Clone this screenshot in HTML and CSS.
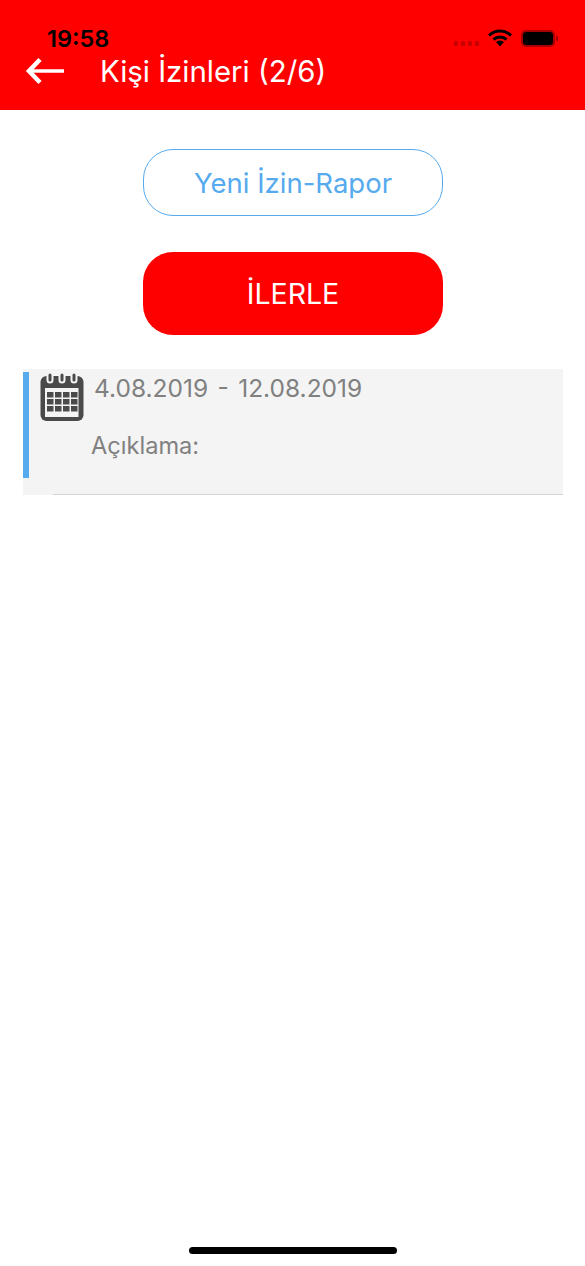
FILE: index.html
```html
<!DOCTYPE html>
<html lang="tr">
<head>
    <meta charset="UTF-8">
    <meta name="viewport" content="width=device-width, initial-scale=1.0">
    <title>Kişi İzinleri</title>
    <link rel="stylesheet" href="styles.css">
</head>
<body>
    <header class="topbar">
        <div class="status-bar">
            <span class="status-time">19:58</span>
            <div class="status-icons">
                <div class="signal">
                    <span></span><span></span><span></span><span></span>
                </div>
                <svg class="wifi" width="24" height="18" viewBox="0 0 24 18">
                    <path d="M1 6.500 A16 16 0 0 1 23 6.500" fill="none" stroke="#000" stroke-width="3"/>
                    <path d="M5.500 10.500 A10 10 0 0 1 18.500 10.500" fill="none" stroke="#000" stroke-width="3"/>
                    <path d="M8 13 A6 6 0 0 1 16 13 L12 17.500 Z" fill="#000"/>
                </svg>
                <div class="battery">
                    <div class="battery-fill"></div>
                </div>
                <div class="battery-cap"></div>
            </div>
        </div>
        <div class="nav-row">
            <svg class="back-arrow" width="40" height="28" viewBox="0 0 40 28">
                <path d="M39 14 H5" fill="none" stroke="#fff" stroke-width="3.500"/>
                <path d="M15 2.500 L4 14 L15 25.500" fill="none" stroke="#fff" stroke-width="4.500"/>
            </svg>
            <h1 class="nav-title">Kişi İzinleri (2/6)</h1>
        </div>
    </header>

    <main class="content">
        <a class="btn btn-outline">Yeni İzin-Rapor</a>
        <a class="btn btn-red">İLERLE</a>

        <div class="leave-row">
            <div class="leave-bar"></div>
            <div class="leave-body">
                <div class="leave-head">
                    <svg class="calendar" width="44" height="50" viewBox="0 0 44 50">
                        <rect x="0.500" y="4" width="43" height="45" rx="6" fill="#4a4a4a"/>
                        <rect x="5" y="16" width="33.500" height="29" fill="#f4f4f4"/>
                        <path d="M10 8 V3.500 M22 8 V3.500 M34 8 V3.500" stroke="#f4f4f4" stroke-width="7" stroke-linecap="round"/>
                        <path d="M10 8 V3 M22 8 V3 M34 8 V3" stroke="#4a4a4a" stroke-width="3" stroke-linecap="round"/>
                        <g fill="#4a4a4a">
                            <rect x="7" y="20" width="6.500" height="5.500"/><rect x="15" y="20" width="6.500" height="5.500"/><rect x="23" y="20" width="6.500" height="5.500"/><rect x="31" y="20" width="6.500" height="5.500"/>
                            <rect x="7" y="27" width="6.500" height="5.500"/><rect x="15" y="27" width="6.500" height="5.500"/><rect x="23" y="27" width="6.500" height="5.500"/><rect x="31" y="27" width="6.500" height="5.500"/>
                            <rect x="7" y="34" width="6.500" height="5.500"/><rect x="15" y="34" width="6.500" height="5.500"/><rect x="23" y="34" width="6.500" height="5.500"/><rect x="31" y="34" width="6.500" height="5.500"/>
                        </g>
                    </svg>
                    <span class="leave-dates">4.08.2019 - 12.08.2019</span>
                </div>
                <div class="leave-note">Açıklama:</div>
            </div>
        </div>
    </main>

    <div class="home-indicator"></div>
</body>
</html>
```

FILE: styles.css
```css
body {
    font-family: Inter, "Noto Sans", "Liberation Sans", sans-serif;
    margin: 0;
    padding: 0;
    background-color: #fff;
    height: 1266px;
    position: relative;
    overflow: hidden;
}

.topbar {
    background-color: #ff0000;
    height: 110px;
    box-sizing: border-box;
    padding-top: 24px;
}
.status-bar {
    display: flex;
    justify-content: space-between;
    align-items: center;
    height: 28px;
    padding: 0 27px 0 47px;
}
.status-time {
    color: #000;
    font-size: 23.500px;
    font-weight: 600;
}
.status-icons {
    display: flex;
    align-items: center;
}
.signal {
    display: flex;
    gap: 3px;
    margin-right: 9px;
    margin-top: 10px;
}
.signal span {
    width: 4px;
    height: 5px;
    border-radius: 1px;
    background-color: #c80000;
}
.wifi {
    margin-right: 9px;
}
.battery {
    width: 34px;
    height: 17px;
    box-sizing: border-box;
    border: 2px solid #a80000;
    border-radius: 5px;
    padding: 0;
}
.battery-fill {
    height: 100%;
    background-color: #000;
    border-radius: 3px;
}
.battery-cap {
    width: 2px;
    height: 5px;
    margin-left: 1px;
    background-color: #a80000;
}

.nav-row {
    display: flex;
    align-items: center;
    height: 38px;
    padding-left: 25px;
}
.back-arrow {
    margin-top: -1px;
}
.nav-title {
    margin: 0 0 0 35px;
    color: #fff;
    font-size: 29.400px;
    font-weight: 400;
}

.content {
    display: flex;
    flex-direction: column;
    align-items: center;
    padding: 39px 22px 0 23px;
}
.btn {
    width: 300px;
    box-sizing: border-box;
    display: flex;
    align-items: center;
    justify-content: center;
    border-radius: 30px;
}
.btn-outline {
    height: 67px;
    border: 1px solid #56aaee;
    color: #56aaee;
    font-size: 27.500px;
}
.btn-red {
    height: 83px;
    margin-top: 36px;
    background-color: #ff0000;
    color: #fff;
    font-size: 28.500px;
}

.leave-row {
    align-self: stretch;
    display: flex;
    align-items: flex-start;
    height: 126px;
    box-sizing: border-box;
    margin-top: 34px;
    background-color: #f4f4f4;
    position: relative;
}
/* separator starts after the inset, the grey runs under it */
.leave-row::after {
    content: "";
    position: absolute;
    left: 30px;
    right: 0;
    bottom: 0;
    height: 1px;
    background-color: #d4d4d4;
}
.leave-bar {
    width: 6px;
    height: 106px;
    margin-top: 3px;
    background-color: #56aaee;
}
.leave-body {
    padding: 3px 0 0 11px;
}
.leave-head {
    display: flex;
    align-items: flex-start;
}
.leave-dates {
    margin: 1px 0 0 10px;
    color: #808080;
    font-size: 24.500px;
    line-height: 30px;
    word-spacing: 2.500px;
}
.leave-note {
    margin: 9px 0 0 51px;
    color: #808080;
    font-size: 23.600px;
    line-height: 30px;
}

.home-indicator {
    position: absolute;
    left: 189px;
    bottom: 12px;
    width: 208px;
    height: 7px;
    border-radius: 4px;
    background-color: #000;
}
```
